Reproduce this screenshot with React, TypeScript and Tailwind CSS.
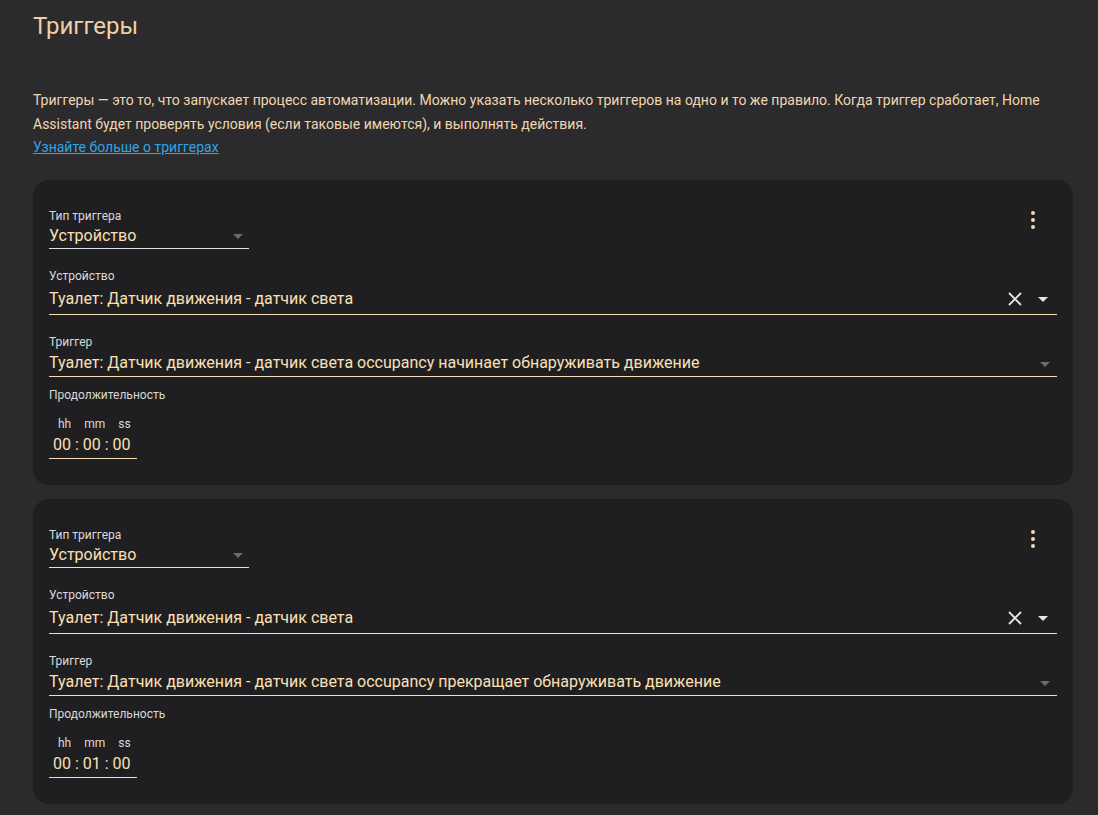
import React from "react";

const font = { fontFamily: "Roboto, 'Noto Sans', sans-serif" };

function Caret({ dim }: { dim?: boolean }) {
  return (
    <svg width="10" height="5" viewBox="0 0 10 5" className={dim ? "fill-[#6b6b6b]" : "fill-[#e6e6e6]"}>
      <path d="M0 0 L10 0 L5 5 Z" />
    </svg>
  );
}

function Card({ trigger, time }: { trigger: string; time: string[] }) {
  return (
    <div className="bg-[#1f1f21] rounded-[16px] pl-4 pr-4 pt-[28px] pb-[26px]">
      <div className="flex items-start justify-between">
        <div className="w-[200px]">
          <div className="text-[12px] leading-[16px] text-[#d9d9d9]">Тип триггера</div>
          <div className="flex items-end justify-between border-b border-[#e4e4e4] h-[25px] pb-[2px]">
            <span className="text-[16px] text-[#fce0b4] leading-[20px]">Устройство</span>
            <span className="mr-[6px] self-center mt-[2px]"><Caret dim /></span>
          </div>
        </div>
        <div className="mr-[22px] mt-[3px] flex flex-col gap-[3px]">
          <span className="w-[4px] h-[4px] rounded-full bg-[#f3d9b0]" />
          <span className="w-[4px] h-[4px] rounded-full bg-[#f3d9b0]" />
          <span className="w-[4px] h-[4px] rounded-full bg-[#f3d9b0]" />
        </div>
      </div>

      <div className="mt-[19px]">
        <div className="text-[12px] leading-[16px] text-[#d9d9d9]">Устройство</div>
        <div className="flex items-center justify-between border-b border-[#f6dfb6] h-[31px]">
          <span className="text-[16px] text-[#fce0b4] leading-[20px]">Туалет: Датчик движения - датчик света</span>
          <div className="flex items-center gap-[16px] mr-[9px]">
            <svg width="14" height="14" viewBox="0 0 14 14" className="stroke-[#e8e8e8]" strokeWidth="1.8">
              <path d="M1 1 L13 13 M13 1 L1 13" />
            </svg>
            <Caret />
          </div>
        </div>
      </div>

      <div className="mt-[19px]">
        <div className="text-[12px] leading-[16px] text-[#d9d9d9]">Триггер</div>
        <div className="flex items-center justify-between border-b border-[#f6dfb6] h-[27px]">
          <span className="text-[16px] text-[#fce0b4] leading-[20px]">{trigger}</span>
          <span className="mr-[7px] mt-[3px]"><Caret dim /></span>
        </div>
      </div>

      <div className="mt-[10px] text-[12px] leading-[16px] text-[#d9d9d9]">Продолжительность</div>
      <div className="mt-[14px] w-[88px] border-b border-[#f6dfb6] pb-[3px]">
        <div className="flex text-[12px] leading-[14px] text-[#d9d9d9] pl-[9px] gap-[13px]">
          <span>hh</span>
          <span>mm</span>
          <span>ss</span>
        </div>
        <div className="text-[16px] leading-[20px] text-[#fce0b4] pl-[4px] mt-[4px]">
          {time[0]} : {time[1]} : {time[2]}
        </div>
      </div>
    </div>
  );
}

export default function App() {
  return (
    <div className="min-h-[815px] bg-[#2b2b2d] px-[33px] pt-[12px] pb-[12px]" style={font}>
      <h1 className="text-[24px] leading-[28px] text-[#eed0a6] font-normal">Триггеры</h1>
      <p className="mt-[48px] text-[14px] leading-[24px] text-[#f0d6b0]">
        Триггеры — это то, что запускает процесс автоматизации. Можно указать несколько триггеров на одно и то же правило. Когда триггер сработает, Home Assistant будет проверять условия (если таковые имеются), и выполнять действия.
      </p>
      <a className="block text-[14px] leading-[24px] text-[#2fa4e6] underline -mt-[1px]">Узнайте больше о триггерах</a>
      <div className="mt-[21px] w-[1040px] flex flex-col gap-[14px]">
        <Card
          trigger="Туалет: Датчик движения - датчик света occupancy начинает обнаруживать движение"
          time={["00", "00", "00"]}
        />
        <Card
          trigger="Туалет: Датчик движения - датчик света occupancy прекращает обнаруживать движение"
          time={["00", "01", "00"]}
        />
      </div>
    </div>
  );
}
